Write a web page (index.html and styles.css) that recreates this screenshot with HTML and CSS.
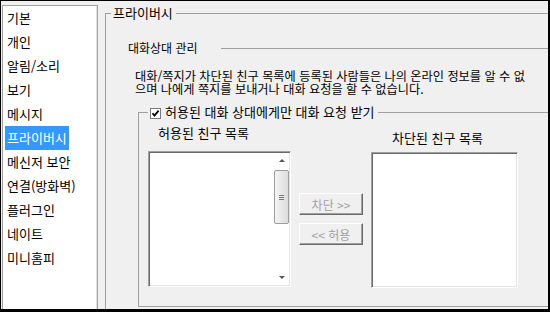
FILE: index.html
```html
<!DOCTYPE html>
<html lang="ko">
<head>
<meta charset="UTF-8">
<title>환경설정 - 프라이버시</title>
<link rel="stylesheet" href="styles.css">
</head>
<body>
<div class="window">
  <ul class="menu">
    <li><span>기본</span></li>
    <li><span>개인</span></li>
    <li><span>알림/소리</span></li>
    <li><span>보기</span></li>
    <li><span>메시지</span></li>
    <li class="active"><span>프라이버시</span></li>
    <li><span>메신저 보안</span></li>
    <li><span>연결(방화벽)</span></li>
    <li><span>플러그인</span></li>
    <li><span>네이트</span></li>
    <li><span>미니홈피</span></li>
  </ul>

  <fieldset class="group privacy">
    <legend>프라이버시</legend>
    <div class="section-head"><span>대화상대 관리</span><i class="rule"></i></div>
    <p class="note">대화/쪽지가 차단된 친구 목록에 등록된 사람들은 나의 온라인 정보를 알 수 없<br>으며 나에게 쪽지를 보내거나 대화 요청을 할 수 없습니다.</p>

    <fieldset class="group friends">
      <legend><span class="check"><svg width="9" height="9" viewBox="0 0 9 9"><path d="M1.5 4.2 L3.5 6.6 L7.6 1.6" fill="none" stroke="#000" stroke-width="1.7"/></svg></span>허용된 대화 상대에게만 대화 요청 받기</legend>
      <div class="columns">
        <div class="col allowed">
          <div class="col-title">허용된 친구 목록</div>
          <div class="listbox">
            <div class="list-body"></div>
            <div class="scrollbar">
              <div class="arrow up"></div>
              <div class="thumb"><i></i><i></i><i></i></div>
              <div class="track"></div>
              <div class="arrow down"></div>
            </div>
          </div>
        </div>
        <div class="col actions">
          <button disabled>차단 &gt;&gt;</button>
          <button disabled>&lt;&lt; 허용</button>
        </div>
        <div class="col blocked">
          <div class="col-title">차단된 친구 목록</div>
          <div class="listbox"></div>
        </div>
      </div>
    </fieldset>
  </fieldset>
</div>
</body>
</html>
```

FILE: styles.css
```css
body {
  margin: 0;
  font-family: "Noto Sans CJK KR", "Liberation Sans", sans-serif;
  font-size: 12px;
  color: #000;
}

.window {
  width: 550px;
  height: 312px;
  box-sizing: border-box;
  border: 1px solid #000;
  border-right-width: 2px;
  border-bottom-width: 3px;
  background: #f0f0f0;
  display: flex;
  align-items: flex-start;
  overflow: hidden;
}

/* left menu */
.menu {
  list-style: none;
  margin: 4px 0 0 1px;
  padding: 0;
  width: 96px;
  height: 340px;
  flex-shrink: 0;
  box-sizing: border-box;
  border: 1px solid #a0a0a0;
  box-shadow: inset -1px 0 #e3e3e3;
  background: #fff;
  font-size: 13px;
}

.menu li {
  height: 24px;
  line-height: 24px;
  padding-left: 2px;
  white-space: nowrap;
}

.menu span {
  display: inline-block;
  padding: 0 2px;
}

.menu .active span {
  background: #3399ff;
  color: #fff;
}

/* group boxes */
.group {
  margin: 0;
  border: 1px solid #a0a0a0;
  min-width: 0;
  flex-shrink: 0;
}

.group legend {
  padding: 0 3px 0 2px;
  line-height: 14px;
  font-size: 13px;
  white-space: nowrap;
}

.privacy {
  margin: 5px 0 0 7px;
  padding: 0 0 0 5px;
  width: 470px;
  height: 340px;
}

.section-head {
  display: flex;
  align-items: center;
  margin: 21px 0 0 17px;
  line-height: 14px;
}

.section-head .rule {
  flex: 1;
  margin-left: 23px;
  border-top: 1px solid #a0a0a0;
}

.note {
  margin: 15px 0 0 24px;
  font-size: 12.2px;
  line-height: 13px;
  white-space: nowrap;
}

.friends {
  margin: 9px 0 0 27px;
  padding: 7px 0 18px 9px;
  width: 430px;
}

.check {
  display: inline-block;
  width: 11px;
  height: 11px;
  box-sizing: border-box;
  border: 1px solid #7a7a7a;
  background: #fff;
  margin-right: 4px;
  vertical-align: -2px;
}

.check svg {
  display: block;
}

/* lists */
.columns {
  display: flex;
  gap: 8px;
}

.col-title {
  line-height: 14px;
  font-size: 13px;
  white-space: nowrap;
}

.allowed {
  width: 143px;
}

.allowed .col-title {
  margin-left: 10px;
}

.allowed .listbox {
  margin-top: 11px;
  display: flex;
}

.blocked {
  width: 147px;
}

.blocked .col-title {
  margin: 5px 0 0 21px;
}

.blocked .listbox {
  margin-top: 7px;
}

.listbox {
  height: 136px;
  box-sizing: border-box;
  background: #fff;
  border: 1px solid;
  border-color: #a0a0a0 #fff #fff #a0a0a0;
  box-shadow: inset 1px 1px #696969, inset -1px -1px #e3e3e3;
}

.list-body {
  flex: 1;
}

.scrollbar {
  width: 15px;
  margin: 1px 1px 1px 0;
  display: flex;
  flex-direction: column;
  align-items: center;
}

.arrow {
  height: 15px;
  width: 15px;
  display: flex;
  align-items: center;
  justify-content: center;
}

.arrow::before {
  content: "";
  border-left: 3px solid transparent;
  border-right: 3px solid transparent;
}

.arrow.up::before {
  border-bottom: 3px solid #555;
}

.arrow.down::before {
  border-top: 3px solid #555;
}

.thumb {
  margin-top: 2px;
  width: 15px;
  height: 54px;
  box-sizing: border-box;
  border: 1px solid #9c9c9c;
  border-radius: 2px;
  background: linear-gradient(to right, #f4f4f4, #dcdcdc);
  display: flex;
  flex-direction: column;
  align-items: center;
  justify-content: center;
  gap: 1px;
}

.thumb i {
  width: 5px;
  height: 1px;
  background: #7a7a7a;
}

.track {
  flex: 1;
}

/* buttons */
.actions {
  width: 64px;
  padding-top: 67px;
  display: flex;
  flex-direction: column;
  gap: 8px;
}

.actions button {
  height: 22px;
  padding: 0;
  font-family: inherit;
  font-size: 12px;
  color: #a0a0a0;
  background: #f0f0f0;
  border: 1px solid;
  border-color: #fff #696969 #696969 #fff;
  box-shadow: inset -1px -1px #a0a0a0;
  white-space: nowrap;
}
```
